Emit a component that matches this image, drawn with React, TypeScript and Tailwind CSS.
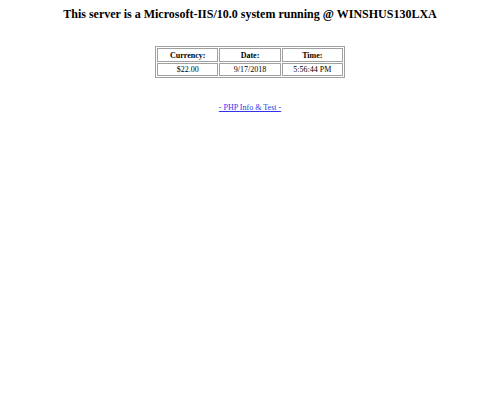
import React from 'react';

const App: React.FC = () => {
  return (
    <div className="min-h-[417px] w-[500px] bg-white text-black" style={{ fontFamily: '"Liberation Serif", serif' }}>
      <h1 className="pt-[7px] text-center text-[12px] font-bold leading-[14px]">
        This server is a Microsoft-IIS/10.0 system running @ WINSHUS130LXA
      </h1>
      <div className="mt-[25px] flex justify-center">
        <table className="w-[190px] table-fixed border border-[#a0a0a0] border-separate border-spacing-[1px] text-[8px] leading-[9px]">
          <tbody>
            <tr>
              <th className="h-[14px] border border-[#a0a0a0] font-bold">Currency:</th>
              <th className="h-[14px] border border-[#a0a0a0] font-bold">Date:</th>
              <th className="h-[14px] border border-[#a0a0a0] font-bold">Time:</th>
            </tr>
            <tr>
              <td className="h-[13px] border border-[#a0a0a0] text-center">$22.00</td>
              <td className="h-[13px] border border-[#a0a0a0] text-center">9/17/2018</td>
              <td className="h-[13px] border border-[#a0a0a0] text-center">5:56:44 PM</td>
            </tr>
          </tbody>
        </table>
      </div>
      <p className="mt-[25px] text-center text-[8px] leading-[10px]">
        <a href="#" className="text-[#3333ee] underline">- PHP Info &amp; Test -</a>
      </p>
    </div>
  );
};

export default App;
